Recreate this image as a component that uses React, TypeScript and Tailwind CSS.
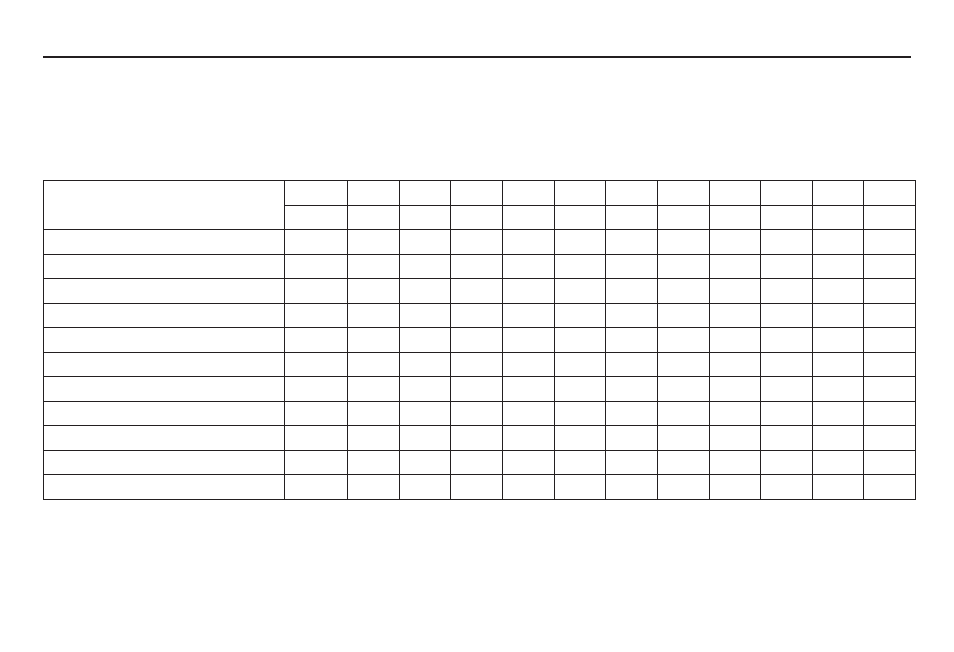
import React from 'react';

// 12 data columns, 13 grid rows (2 header + 11 body)
const dataCols = Array.from({ length: 12 }, (_, i) => i);
const bodyRows = Array.from({ length: 11 }, (_, i) => i);

const Cell: React.FC<{ className?: string }> = ({ className = '' }) => (
  <div className={`border-r border-b border-[#231f20] ${className}`} />
);

export default function App() {
  return (
    <div className="w-[954px] h-[652px] bg-white pt-[56px] font-['Liberation_Sans',sans-serif]">
      {/* Rule under the page header */}
      <div className="ml-[43px] w-[868px] h-[2px] bg-[#231f20]" />

      {/* Empty grid table */}
      <div className="ml-[43px] mt-[122px] w-[873px] border-t border-l border-[#231f20] grid grid-cols-[241px_63px_52px_51px_52px_52px_51px_52px_52px_51px_52px_51px_52px] grid-rows-[25px_24px_25px_24px_25px_24px_25px_24px_25px_24px_25px_24px_25px]">
        <Cell className="row-span-2" />
        {dataCols.map((c) => (
          <Cell key={`h1-${c}`} />
        ))}
        {dataCols.map((c) => (
          <Cell key={`h2-${c}`} />
        ))}
        {bodyRows.map((r) => (
          <React.Fragment key={r}>
            <Cell />
            {dataCols.map((c) => (
              <Cell key={c} />
            ))}
          </React.Fragment>
        ))}
      </div>
    </div>
  );
}
